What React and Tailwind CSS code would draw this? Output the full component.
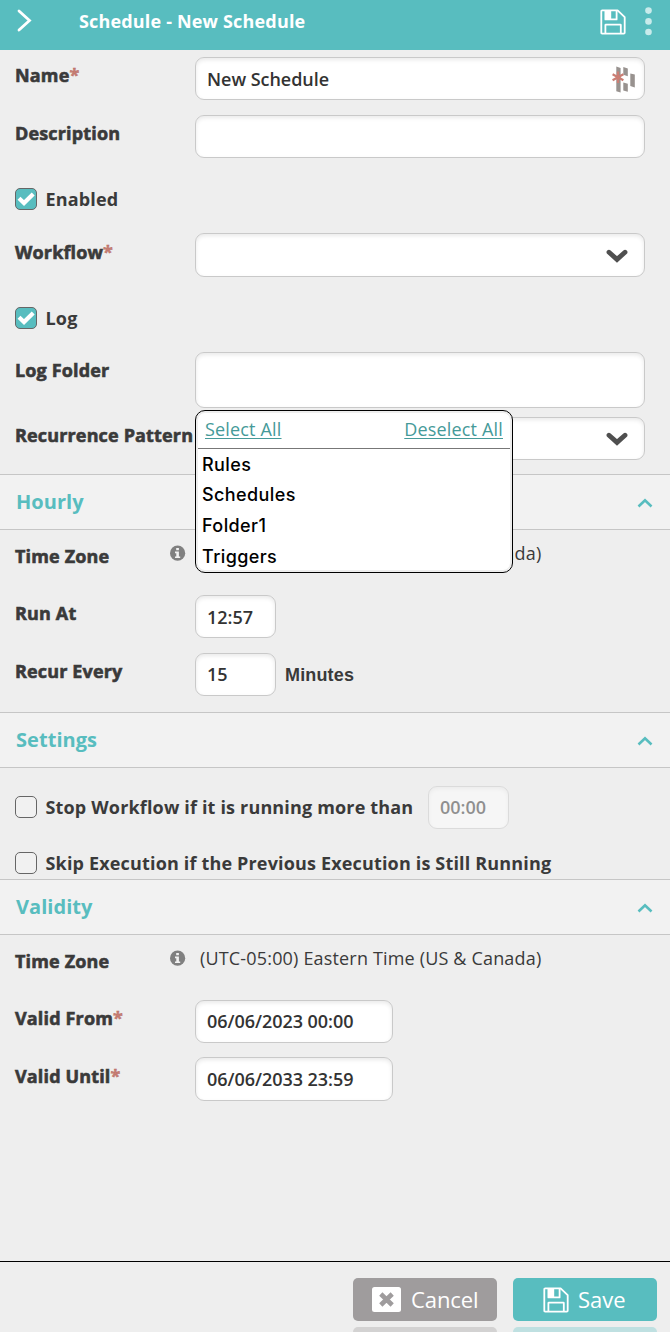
import React, { useState } from 'react'

const FloppyIcon = ({ className }) => (
    <svg className={className} viewBox="0 0 26 26" fill="none" stroke="#fff" strokeWidth="1.8" strokeLinejoin="round">
        <path d="M1.3 2.2Q1.3 1.3 2.2 1.3H17.6L24.7 8.2V23.8Q24.7 24.7 23.8 24.7H2.2Q1.3 24.7 1.3 23.8Z" />
        <path d="M5.4 1.5V10.4H16.6V1.5" />
        <path d="M5.4 1.5H11.2V10.4H5.4Z" fill="#fff" stroke="none" />
        <path d="M5.4 24.5V16Q5.4 15.6 5.8 15.6H20.4Q20.8 15.6 20.8 16V24.5" />
    </svg>
)

const Chevron = ({ className = '' }) => (
    <svg className={`h-[14px] w-[22px] ${className}`} viewBox="0 0 22 14" fill="none" stroke="#4f4f4f" strokeWidth="4.8" strokeLinecap="round">
        <path d="M3 3.2L11 10.4L19 3.2" />
    </svg>
)

const InfoIcon = () => (
    <svg className="h-4 w-4" viewBox="0 0 16 16">
        <circle cx="7.6" cy="8.2" r="7.6" fill="#808080" />
        <path d="M6.2 3h2.7v2.2H6.2zM5 6.6h3.9v4.8h1.3V13H5v-1.6h1.3V8.2H5z" fill="#f2f2f2" />
    </svg>
)

const Label = ({ children, required }) => (
    <div className="w-[180px] shrink-0 text-[18px] leading-[24px] font-bold tracking-[0.15px] whitespace-nowrap [-webkit-text-stroke:0.6px_#3a3a3a]">
        {children}
        {required && <span className="text-[#c87f75] [-webkit-text-stroke:0.4px_#b3675e]">*</span>}
    </div>
)

const boxStyle = 'rounded-[9px] border border-[#c9c9c9] bg-white shadow-[inset_0_2px_4px_rgba(0,0,0,0.09)]'

const Input = ({ value = '', className = '', children }) => (
    <div className={`flex shrink-0 items-center justify-between pl-[11px] ${boxStyle} ${className}`}>
        <span className="text-[18px] leading-[24px] font-semibold tracking-[-0.04px] text-[#333]">{value}</span>
        {children}
    </div>
)

const Check = ({ initial = false, children }) => {
    const [on, setOn] = useState(initial)
    return (
        <div className="flex items-center" onClick={() => setOn(!on)}>
            <span className={`mr-[8.5px] flex h-[22px] w-[22px] shrink-0 items-center justify-center rounded-[5px] border border-[#666] ${on ? 'bg-[#58bdbf]' : 'bg-[#f1f1f1]'}`}>
                {on && (
                    <svg className="h-4 w-[18px]" viewBox="0 0 18 16" fill="none" stroke="#fff" strokeWidth="4.2">
                        <path d="M2 7.2L7 12L16.2 3" />
                    </svg>
                )}
            </span>
            <span className="text-[18px] leading-[22px] font-bold tracking-[0.165px] whitespace-nowrap">{children}</span>
        </div>
    )
}

const SectionHeader = ({ title }) => (
    <div className="flex h-14 shrink-0 items-center justify-between border-y border-[#c6c6c6] bg-[#f2f2f2] pr-[17px] pl-4">
        <h2 className="text-[20px] leading-[26px] font-bold tracking-[0.05px] text-[#58bdbf]">{title}</h2>
        <svg className="mt-px h-[10px] w-4" viewBox="0 0 16 10" fill="none" stroke="#58bdbf" strokeWidth="2.6">
            <path d="M1.5 8.5L8 2.3L14.5 8.5" />
        </svg>
    </div>
)

const TimeZoneRow = () => (
    <div className="flex h-[58px] shrink-0 pl-[15px]">
        <div className="w-[155px] pt-[14px]">
            <Label>Time Zone</Label>
        </div>
        <div className="pt-[15px]"><InfoIcon /></div>
        <div className="pt-[11px] pl-[14px] text-[18px] leading-[24px] tracking-[0.17px]">(UTC-05:00) Eastern Time (US &amp; Canada)</div>
    </div>
)

const folders = ['Rules', 'Schedules', 'Folder1', 'Triggers']

const FolderMenu = () => (
    <div className="absolute top-[58px] left-0 z-10 h-[163px] w-[318px] rounded-[10px] border border-black bg-white p-px shadow-[inset_0_0_0_2px_#eee]">
        <div className="mx-px mt-px flex h-[36px] items-center justify-between border-b border-[#777] pr-[7px] pb-[2px] pl-[7px] text-[18px] tracking-[0.17px] text-[#459a99] underline decoration-1 underline-offset-2">
            <span>Select All</span>
            <span>Deselect All</span>
        </div>
        <ul className="-mt-[0.3px] pl-[5px] font-[Inter] text-[18px] font-medium tracking-[0.4px] text-black">
            {folders.map((name) => (
                <li key={name} className="h-[30.67px] leading-[31px]">{name}</li>
            ))}
        </ul>
    </div>
)

const App = () => {
    return (
        <div className="flex h-[1332px] w-[670px] flex-col overflow-hidden bg-[#eee] font-['Open_Sans',sans-serif] text-[#3a3a3a]">
            {/* Title bar */}
            <header className="flex h-[50px] shrink-0 bg-[#58bdbf] text-white">
                <svg className="mt-[9px] ml-[16px] h-[23px] w-[16px]" viewBox="0 0 16 23" fill="none" stroke="#fff" strokeWidth="2.8" strokeLinecap="round">
                    <path d="M3 2L13.5 11.5L3 21" />
                </svg>
                <h1 className="mt-[9px] ml-[47px] text-[18px] leading-[24px] font-bold tracking-[0.17px]">Schedule - New Schedule</h1>
                <FloppyIcon className="mt-[9px] ml-auto h-[26px] w-[26px]" />
                <svg className="mt-[7px] mr-[18px] ml-[19px] h-[29px] w-[7px]" viewBox="0 0 7 29" fill="#c9ebeb">
                    <circle cx="3.5" cy="3.6" r="3.3" />
                    <circle cx="3.5" cy="14.4" r="3.3" />
                    <circle cx="3.5" cy="25" r="3.3" />
                </svg>
            </header>

            {/* General */}
            <div className="flex h-[58px] shrink-0 pt-[7px] pl-[15px]">
                <div className="pt-[6px]"><Label required>Name</Label></div>
                <Input value="New Schedule" className="h-[43px] w-[450px] pr-[9px]">
                    <svg className="h-[28px] w-[24px]" viewBox="0 0 24 28">
                        <path d="M5.3 1.4L9.6 3V27.4L5.3 26.2zM12.3 2L16.8 3.6V11.2L12.3 9.8zM12.3 17.4L16.8 18.8V26.8L12.3 25.4zM19.3 8.4L23.8 9.6V22.6L19.3 21z" fill="#98928f" />
                        <path d="M7 6.4V18M1.6 9.2L12.4 15.2M1.6 15.2L12.4 9.2" stroke="#cb7e74" strokeWidth="2.2" />
                    </svg>
                </Input>
            </div>
            <div className="flex h-[58px] shrink-0 pt-[7px] pl-[15px]">
                <div className="pt-[6px]"><Label>Description</Label></div>
                <Input className="h-[43px] w-[450px]" />
            </div>
            <div className="h-[60px] shrink-0 pt-[22px] pl-[15px]">
                <Check initial>Enabled</Check>
            </div>
            <div className="flex h-[59px] shrink-0 pt-[7px] pl-[15px]">
                <div className="pt-[7px]"><Label required>Workflow</Label></div>
                <Input className="h-[44px] w-[450px] pr-4"><Chevron className="mt-[2px]" /></Input>
            </div>
            <div className="h-[60px] shrink-0 pt-[22px] pl-[15px]">
                <Check initial>Log</Check>
            </div>
            <div className="flex h-[65px] shrink-0 pt-[7px] pl-[15px]">
                <div className="pt-[6px]"><Label>Log Folder</Label></div>
                <div className="relative">
                    <Input className="h-[56px] w-[450px]" />
                    <FolderMenu />
                </div>
            </div>
            <div className="flex h-[64px] shrink-0 pt-[7px] pl-[15px]">
                <div className="pt-[6px]"><Label>Recurrence Pattern</Label></div>
                <Input className="h-[43px] w-[450px] pr-4"><Chevron /></Input>
            </div>

            <SectionHeader title="Hourly" />
            <TimeZoneRow />
            <div className="flex h-[58px] shrink-0 pt-[7px] pl-[15px]">
                <div className="pt-[6px]"><Label>Run At</Label></div>
                <Input value="12:57" className="h-[43px] w-[81px]" />
            </div>
            <div className="flex h-[66px] shrink-0 pt-[7px] pl-[15px]">
                <div className="pt-[6px]"><Label>Recur Every</Label></div>
                <Input value="15" className="h-[43px] w-[81px] pb-px" />
                <span className="pt-[10px] pl-[9px] font-['Liberation_Sans'] text-[18px] leading-[24px] font-bold tracking-[0.15px]">Minutes</span>
            </div>

            <SectionHeader title="Settings" />
            <div className="flex h-[79px] shrink-0 items-start pt-[18px] pl-[15px]">
                <div className="pt-[10px]"><Check>Stop Workflow if it is running more than</Check></div>
                <Input value="00:00" className="mr-[161px] ml-auto h-[43px] w-[81px] pb-px opacity-50" />
            </div>
            <div className="h-[32px] shrink-0 pt-[5px] pl-[15px]">
                <Check>Skip Execution if the Previous Execution is Still Running</Check>
            </div>

            <SectionHeader title="Validity" />
            <TimeZoneRow />
            <div className="flex h-[57px] shrink-0 pt-[7px] pl-[15px]">
                <div className="pt-[6px]"><Label required>Valid From</Label></div>
                <Input value="06/06/2023 00:00" className="h-[43px] w-[198px] pb-px" />
            </div>
            <div className="flex h-[58px] shrink-0 pt-[7px] pl-[15px]">
                <div className="pt-[7px]"><Label required>Valid Until</Label></div>
                <Input value="06/06/2033 23:59" className="h-[44px] w-[198px]" />
            </div>

            {/* Actions */}
            <footer className="mt-auto h-[71px] shrink-0 border-t border-black pt-4 pr-[13px] text-white">
                <div className="flex justify-end gap-4">
                    <button className="flex h-[43px] w-36 items-center rounded-[5px] bg-[#9f9c9d] pl-[19px] text-[22px] tracking-[-0.1px]">
                        <svg className="mr-[10px] h-[25px] w-[29px]" viewBox="0 0 29 25">
                            <rect width="29" height="25" rx="2.5" fill="#fff" />
                            <path d="M8.8 7L20.2 18M20.2 7L8.8 18" stroke="#9f9c9d" strokeWidth="4.6" />
                        </svg>
                        Cancel
                    </button>
                    <button className="flex h-[43px] w-36 items-center rounded-[5px] bg-[#58bdbf] pl-[30px] text-[22px]">
                        <FloppyIcon className="mr-[9px] h-[26px] w-[26px]" />
                        Save
                    </button>
                </div>
                <div className="mt-[6px] flex justify-end gap-4">
                    <div className="h-[5px] w-36 rounded-t-[5px] bg-[#d3d2d2]" />
                    <div className="h-[5px] w-36 rounded-t-[5px] bg-[#bfe0e1]" />
                </div>
            </footer>
        </div>
    )
}

export default App
